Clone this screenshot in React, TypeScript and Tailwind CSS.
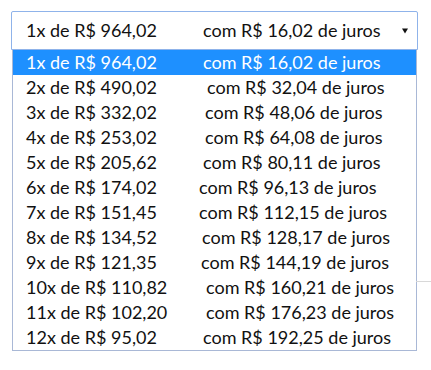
import React from "react";

const rows = [
  { n: "1x", v: "964,02", j: "16,02", pad: "pl-[4px]" },
  { n: "2x", v: "490,02", j: "32,04", pad: "pl-[8px]" },
  { n: "3x", v: "332,02", j: "48,06", pad: "pl-[6px]" },
  { n: "4x", v: "253,02", j: "64,08", pad: "pl-[6px]" },
  { n: "5x", v: "205,62", j: "80,11", pad: "pl-[4px]" },
  { n: "6x", v: "174,02", j: "96,13", pad: "pl-[0px]" },
  { n: "7x", v: "151,45", j: "112,15", pad: "pl-[0px]" },
  { n: "8x", v: "134,52", j: "128,17", pad: "pl-[3px]" },
  { n: "9x", v: "121,35", j: "144,19", pad: "pl-[2px]" },
  { n: "10x", v: "110,82", j: "160,21", pad: "pl-[7px]" },
  { n: "11x", v: "102,20", j: "176,23", pad: "pl-[7px]" },
  { n: "12x", v: "95,02", j: "192,25", pad: "pl-[4px]" },
];

const App = () => {
  return (
    <div className="relative h-[370px] w-[431px] bg-white font-['Lato',sans-serif] text-[18px] text-[#111]">
      <div className="absolute right-0 top-[281px] h-px w-[15px] bg-[#d8d8d8]" />
      <div className="pl-[11px] pt-[11px]">
        <div className="flex h-[39px] w-[407px] items-center rounded-t-[2px] border border-[#8fb3ea] bg-white pl-[14px] pr-[9px]">
          <span className="w-[173px]">1x de R$ 964,02</span>
          <span className="pl-[4px]">com R$ 16,02 de juros</span>
          <svg className="ml-auto" width="6" height="6" viewBox="0 0 6 6">
            <path d="M0 0.5H6L3 5.5Z" fill="#111" />
          </svg>
        </div>
        <div className="ml-px w-[405px] border border-t-0 border-[#a9b8d6] bg-white">
          {rows.map((r, i) => (
            <div
              key={r.n}
              className={
                i === 0
                  ? "flex h-[25px] items-center bg-[#1e90ff] pl-[13px] text-white"
                  : "flex h-[25px] items-center pl-[13px]"
              }
            >
              <span className="w-[173px]">
                {r.n} de R$ {r.v}
              </span>
              <span className={r.pad}>com R$ {r.j} de juros</span>
            </div>
          ))}
        </div>
      </div>
    </div>
  );
};

export default App;
